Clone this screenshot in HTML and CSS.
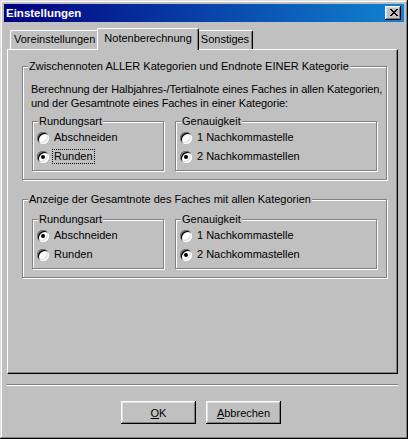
FILE: index.html
```html
<!DOCTYPE html>
<html lang="de">
<head>
<meta charset="utf-8">
<title>Einstellungen</title>
<link rel="stylesheet" href="styles.css">
</head>
<body>
<div class="window">
  <div class="titlebar">
    <span class="title">Einstellungen</span>
    <span class="close-btn">
      <svg width="8" height="7" viewBox="0 0 8 7" shape-rendering="crispEdges">
        <rect x="0" y="0" width="2" height="1" fill="#000"/>
        <rect x="6" y="0" width="2" height="1" fill="#000"/>
        <rect x="1" y="1" width="2" height="1" fill="#000"/>
        <rect x="5" y="1" width="2" height="1" fill="#000"/>
        <rect x="2" y="2" width="4" height="1" fill="#000"/>
        <rect x="3" y="3" width="2" height="1" fill="#000"/>
        <rect x="2" y="4" width="4" height="1" fill="#000"/>
        <rect x="1" y="5" width="2" height="1" fill="#000"/>
        <rect x="5" y="5" width="2" height="1" fill="#000"/>
        <rect x="0" y="6" width="2" height="1" fill="#000"/>
        <rect x="6" y="6" width="2" height="1" fill="#000"/>
      </svg>
    </span>
  </div>
  <div class="content">
    <div class="tabs">
      <div class="tab">Voreinstellungen</div>
      <div class="tab active">Notenberechnung</div>
      <div class="tab">Sonstiges</div>
    </div>
    <div class="panel">
      <div class="group outer first">
        <span class="caption">Zwischennoten ALLER Kategorien und Endnote EINER Kategorie</span>
        <p class="desc">Berechnung der Halbjahres-/Tertialnote eines Faches in allen Kategorien,<br>und der Gesamtnote eines Faches in einer Kategorie:</p>
        <div class="subgroups">
          <div class="group sub">
            <span class="caption">Rundungsart</span>
            <div class="option"><span class="radio"></span><span class="label">Abschneiden</span></div>
            <div class="option"><span class="radio checked"></span><span class="label focus">Runden</span></div>
          </div>
          <div class="group sub">
            <span class="caption">Genauigkeit</span>
            <div class="option"><span class="radio"></span><span class="label">1 Nachkommastelle</span></div>
            <div class="option"><span class="radio checked"></span><span class="label">2 Nachkommastellen</span></div>
          </div>
        </div>
      </div>
      <div class="group outer second">
        <span class="caption">Anzeige der Gesamtnote des Faches mit allen Kategorien</span>
        <div class="subgroups">
          <div class="group sub">
            <span class="caption">Rundungsart</span>
            <div class="option"><span class="radio checked"></span><span class="label">Abschneiden</span></div>
            <div class="option"><span class="radio"></span><span class="label">Runden</span></div>
          </div>
          <div class="group sub">
            <span class="caption">Genauigkeit</span>
            <div class="option"><span class="radio"></span><span class="label">1 Nachkommastelle</span></div>
            <div class="option"><span class="radio checked"></span><span class="label">2 Nachkommastellen</span></div>
          </div>
        </div>
      </div>
    </div>
    <div class="separator"></div>
    <div class="buttons">
      <button class="btn"><u>O</u>K</button>
      <button class="btn"><u>A</u>bbrechen</button>
    </div>
  </div>
</div>
</body>
</html>
```
FILE: styles.css
```css
* { box-sizing: border-box; }

body {
  margin: 0;
  background: #c0c0c0;
  font-family: "Liberation Sans", Arial, sans-serif;
  font-size: 11px;
  color: #000;
}

.window {
  width: 408px;
  height: 439px;
  padding: 4px;
  background: #c0c0c0;
  box-shadow: inset -1px -1px #000, inset 1px 1px #dfdfdf, inset -2px -2px #808080, inset 2px 2px #fff;
  display: flex;
  flex-direction: column;
}

.titlebar {
  height: 18px;
  flex: none;
  display: flex;
  align-items: center;
  justify-content: space-between;
  padding: 0 3px 0 2px;
  background: linear-gradient(90deg, #000080 0%, #1084d0 100%);
  color: #fff;
}

.title {
  font-weight: bold;
  font-size: 11.5px;
  line-height: 18px;
}

.close-btn {
  width: 16px;
  height: 14px;
  background: #c0c0c0;
  box-shadow: inset -1px -1px #000, inset 1px 1px #fff, inset -2px -2px #808080, inset 2px 2px #dfdfdf;
  display: flex;
  align-items: center;
  justify-content: center;
  padding: 0 0 1px 1px;
}

.close-btn svg { display: block; }

.content {
  flex: 1;
  display: flex;
  flex-direction: column;
  padding: 0 6px 0 3px;
}

.tabs {
  display: flex;
  align-items: flex-end;
  height: 21px;
  margin-top: 6px;
  padding-left: 3px;
}

.tab {
  height: 19px;
  padding: 0 3px;
  line-height: 17px;
  border-top: 1px solid #fff;
  border-left: 1px solid #fff;
  border-right: 1px solid #000;
  border-radius: 2px 2px 0 0;
  box-shadow: inset -1px 0 #808080;
  background: #c0c0c0;
  white-space: nowrap;
}

.tab.active {
  height: 22px;
  padding: 0 6px;
  margin: 0 -2px -1px;
  line-height: 18px;
  position: relative;
  z-index: 1;
}

.panel {
  height: 325px;
  flex: none;
  border-top: 1px solid #fff;
  border-left: 1px solid #fff;
  border-right: 1px solid #000;
  border-bottom: 1px solid #000;
  box-shadow: inset -1px -1px #808080;
  padding: 16px 10px 0 14px;
}

.group {
  position: relative;
  border: 1px solid #808080;
  box-shadow: inset 1px 1px #fff, 1px 1px #fff;
}

.caption {
  position: absolute;
  top: -7px;
  left: 5px;
  padding: 0 1px;
  line-height: 13px;
  background: #c0c0c0;
  white-space: nowrap;
}

.outer.first {
  padding: 15px 8px 8px 8px;
}

.outer.second {
  margin-top: 19px;
  padding: 19px 8px 8px 9px;
}

.desc {
  margin: 0;
  line-height: 14px;
  white-space: nowrap;
  letter-spacing: -0.08px;
}

.first .subgroups {
  margin-top: 11px;
  padding-left: 1px;
}

.subgroups {
  display: grid;
  grid-template-columns: 132px 202px;
  gap: 11px;
}

.sub {
  padding: 6px 0 4px 4px;
}

.option {
  height: 19px;
  display: flex;
  align-items: center;
  gap: 5px;
}

.radio {
  width: 12px;
  height: 12px;
  flex: none;
  border-radius: 50%;
  background: #fff;
  position: relative;
  box-shadow: inset 1px 1px 0 #808080, inset -1px -1px 0 #fff, inset 2px 2px 0 #000, inset -2px -2px 0 #dfdfdf;
}

.radio.checked::after {
  content: "";
  position: absolute;
  left: 4px;
  top: 4px;
  width: 4px;
  height: 4px;
  border-radius: 50%;
  background: #000;
}

.label {
  line-height: 13px;
  white-space: nowrap;
}

.label.focus {
  outline: 1px dotted #000;
  padding: 0 1px;
  margin-left: -1px;
}

.separator {
  margin-top: 10px;
  height: 2px;
  border-top: 1px solid #808080;
  border-bottom: 1px solid #fff;
}

.buttons {
  margin-top: 15px;
  padding-right: 3px;
  display: flex;
  justify-content: center;
  gap: 10px;
}

.btn {
  width: 75px;
  height: 23px;
  border: none;
  padding: 0;
  background: #c0c0c0;
  font-family: "Liberation Sans", Arial, sans-serif;
  font-size: 11px;
  color: #000;
  box-shadow: inset -1px -1px #000, inset 1px 1px #fff, inset -2px -2px #808080, inset 2px 2px #dfdfdf;
}
```
